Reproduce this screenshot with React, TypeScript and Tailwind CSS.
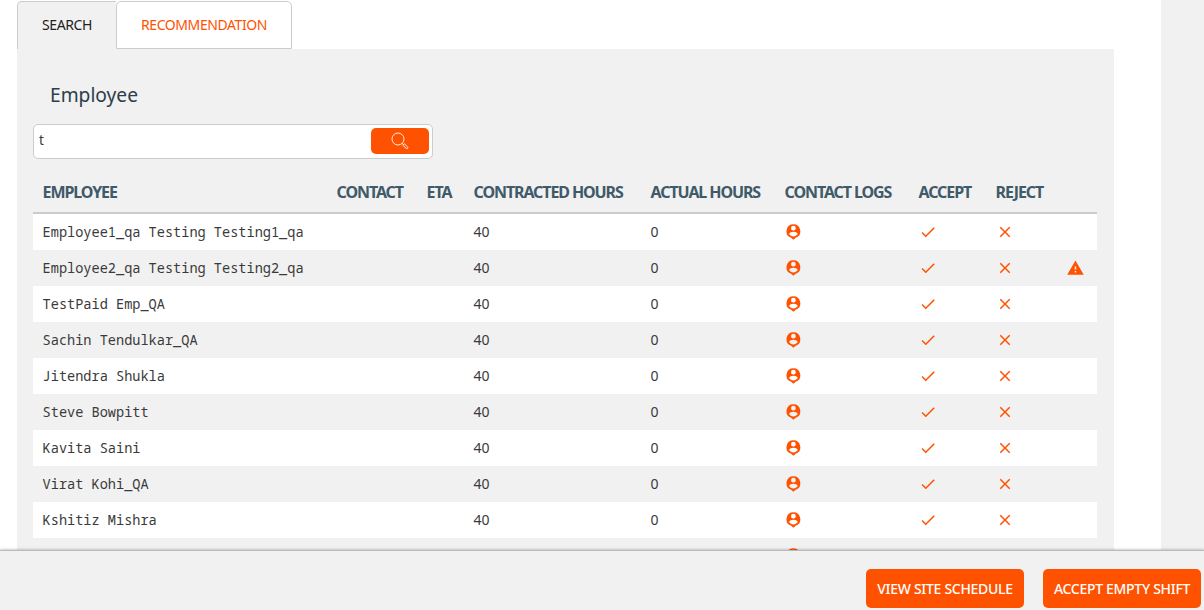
import React from 'react';

const employees = [
  { name: 'Employee1_qa Testing Testing1_qa' },
  { name: 'Employee2_qa Testing Testing2_qa', warning: true },
  { name: 'TestPaid Emp_QA' },
  { name: 'Sachin Tendulkar_QA' },
  { name: 'Jitendra Shukla' },
  { name: 'Steve Bowpitt' },
  { name: 'Kavita Saini' },
  { name: 'Virat Kohi_QA' },
  { name: 'Kshitiz Mishra' },
  { name: '' },
];

const columns = 'grid grid-cols-[294px_90px_47px_177px_134px_134px_77px_70px_41px] pl-[9.600px]';

function ContactIcon() {
  return (
    <svg className="ml-[1.400px] block h-4 w-[15px]" viewBox="-0.4 0 15 16" fill="#ff5200">
      <path
        fillRule="evenodd"
        d="M7 .3a6.900 6.900 0 0 0-2.300 13.400L7 15.700l2.300-2A6.900 6.900 0 0 0 7 .3ZM7 1.800a2.400 2.400 0 1 1 0 4.800A2.400 2.400 0 0 1 7 1.800Zm0 6c2.400 0 4.300 1 4.300 2.300C10.300 11.600 8.800 12.400 7 12.400S3.700 11.600 2.700 10.100C2.700 8.800 4.600 7.800 7 7.800Z"
      />
    </svg>
  );
}

function CheckIcon() {
  return (
    <svg className="block h-[18px] w-[18px]" viewBox="0 0 24 24" fill="#ff5200">
      <path d="M9 16.170 4.830 12l-1.420 1.410L9 19 21 7l-1.410-1.410z" />
    </svg>
  );
}

function CloseIcon() {
  return (
    <svg className="block h-[18px] w-[18px]" viewBox="0 0 24 24" fill="#ff5200">
      <path d="M19 6.410 17.590 5 12 10.590 6.410 5 5 6.410 10.590 12 5 17.590 6.410 19 12 13.410 17.590 19 19 17.590 13.410 12z" />
    </svg>
  );
}

function WarningIcon() {
  return (
    <svg className="block h-[18px] w-[19px]" viewBox="-0.6 0 25.300 24" fill="#ff5200">
      <path d="M1 21h22L12 2 1 21zm12-3h-2v-2h2v2zm0-4h-2v-4h2v4z" />
    </svg>
  );
}

function SearchIcon() {
  return (
    <svg className="h-[18px] w-[18px]" viewBox="0 0 18 18" fill="none" stroke="#fff" strokeWidth="0.9">
      <circle cx="7" cy="7" r="6" />
      <path d="m11.300 11.300 1.200 1.200M11.700 13.200l1.500-1.500 3.500 3.300q.5.700-.1 1.300-.7.600-1.400 0Z" />
    </svg>
  );
}

export default function App() {
  return (
    <div className="flex h-[610px] w-[1204px] flex-col overflow-hidden bg-white font-['Noto_Sans',sans-serif] text-[#3a3a3a]">
      <div className="flex h-[550px] justify-between overflow-hidden">
        <main className="ml-[17px] w-[1097px] pt-px">
          <div className="flex h-12">
            <button className="flex w-[99px] items-center justify-center rounded-tl-[5px] border-t border-l border-[#ccc] bg-[#f1f1f1] pb-[2px] text-[14px] text-[#222]">
              <span className="tracking-[-0.35px]">SEARCH</span>
            </button>
            <button className="flex w-[176px] items-center justify-center rounded-t-[5px] border border-[#ccc] bg-white pb-[2px] text-[14px] text-[#ff5200]">
              <span className="tracking-[-0.42px]">RECOMMENDATION</span>
            </button>
          </div>
          <section className="h-[520px] bg-[#f1f1f1] px-4 pt-[31px]">
            <h1 className="ml-[17px] h-[44px] text-[19.200px] leading-[30px] text-[#2d3e4a]">Employee</h1>
            <div className="flex h-[35px] w-[400px] items-start justify-between rounded-[5px] border border-[#ccc] bg-white pt-[3px] pr-[3px] pl-[5px]">
              <span className="text-[13.500px] leading-[25px]">t</span>
              <button className="flex h-[26px] w-[58px] items-center justify-center rounded-[5px] bg-[#ff5200]">
                <SearchIcon />
              </button>
            </div>
            <div className="mt-[11px] w-[1064px]">
              <div className={`${columns} h-[44px] border-b-2 border-[#ccc] text-[16px] leading-[44px] font-bold tracking-[-1.1px] whitespace-nowrap text-[#3f5a69]`}>
                <span>EMPLOYEE</span>
                <span>CONTACT</span>
                <span>ETA</span>
                <span>CONTRACTED HOURS</span>
                <span>ACTUAL HOURS</span>
                <span>CONTACT LOGS</span>
                <span>ACCEPT</span>
                <span>REJECT</span>
              </div>
              {employees.map((employee, index) => (
                <div key={index} className={`${columns} h-9 items-center text-[14px] ${index % 2 === 0 ? 'bg-white' : 'bg-[#f1f1f1]'}`}>
                  <span className="font-['Noto_Sans_Mono','DejaVu_Sans_Mono',monospace] text-[13.600px] whitespace-nowrap">{employee.name}</span>
                  <span />
                  <span />
                  <span className="pb-[2px]">{employee.name && '40'}</span>
                  <span className="pb-[2px]">{employee.name && '0'}</span>
                  <ContactIcon />
                  <CheckIcon />
                  <CloseIcon />
                  {employee.warning ? <WarningIcon /> : <span />}
                </div>
              ))}
            </div>
          </section>
        </main>
        <div className="w-[43px] bg-[#f1f1f1]" />
      </div>
      <footer className="relative flex h-[60px] items-start justify-end gap-[19px] border-t border-[#bbb] bg-[#f1f1f1] pt-[18px] pr-[3px] text-[14px] font-medium text-white shadow-[0_0_3px_rgba(0,0,0,0.35)]">
        <button className="h-[39px] w-[158px] rounded-[5px] bg-[#ff5200] tracking-[-0.3px] whitespace-nowrap">VIEW SITE SCHEDULE</button>
        <button className="h-[39px] w-[158px] rounded-[5px] bg-[#ff5200] tracking-[-0.3px] whitespace-nowrap">ACCEPT EMPTY SHIFT</button>
      </footer>
    </div>
  );
}
